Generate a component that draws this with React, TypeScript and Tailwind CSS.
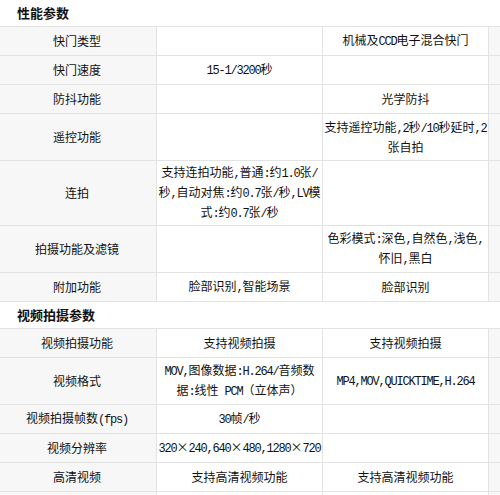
import React from "react";

function T({ s }: { s: string }) {
  const parts = s.split(/([\x20-\x7e]+)/).filter((p) => p.length > 0);
  return (
    <>
      {parts.map((p, i) =>
        /^[\x20-\x7e]+$/.test(p) ? (
          <span key={i} className="font-['Liberation_Mono',monospace] tracking-[-1.2px]">
            {p}
          </span>
        ) : (
          <span key={i}>{p}</span>
        )
      )}
    </>
  );
}

type Content = string | string[];

function CellText({ c }: { c: Content }) {
  if (Array.isArray(c)) {
    return (
      <div className="flex flex-col items-center leading-[18px]">
        {c.map((l, i) => (
          <div key={i} className="whitespace-nowrap">
            <T s={l} />
          </div>
        ))}
      </div>
    );
  }
  return (
    <div className="whitespace-nowrap">
      <T s={c} />
    </div>
  );
}

function Row({ h, a, b, c }: { h: string; a: Content; b: Content; c: Content }) {
  return (
    <div className={`flex border-b border-[#e3e3e3] ${h}`}>
      <div className="w-[157px] shrink-0 border-r border-[#e3e3e3] bg-[#f7f7f7] flex items-center justify-center pr-[2px]">
        <CellText c={a} />
      </div>
      <div className="w-[166px] shrink-0 border-r border-[#e3e3e3] flex items-center justify-center">
        <CellText c={b} />
      </div>
      <div className="w-[166px] shrink-0 border-r border-[#e3e3e3] flex items-center justify-center">
        <CellText c={c} />
      </div>
      <div className="flex-1 bg-[#f7f7f7]" />
    </div>
  );
}

function Header({ t }: { t: string }) {
  return (
    <div className="h-[27px] flex items-center border-b border-[#e3e3e3] pl-[17px] text-[13px] font-bold text-[#111]">
      {t}
    </div>
  );
}

export default function App() {
  return (
    <div className="w-[500px] h-[495px] overflow-hidden bg-white text-[12px] text-[#111] font-['Noto_Sans_CJK_SC',sans-serif]">
      <Header t="性能参数" />
      <Row h="h-[29px]" a="快门类型" b="" c="机械及CCD电子混合快门" />
      <Row h="h-[29px]" a="快门速度" b="15-1/3200秒" c="" />
      <Row h="h-[29px]" a="防抖功能" b="" c="光学防抖" />
      <Row h="h-[47px]" a="遥控功能" b="" c={["支持遥控功能,2秒/10秒延时,2", "张自拍"]} />
      <Row
        h="h-[65px]"
        a="连拍"
        b={["支持连拍功能,普通:约1.0张/", "秒,自动对焦:约0.7张/秒,LV模", "式:约0.7张/秒"]}
        c=""
      />
      <Row h="h-[47px]" a="拍摄功能及滤镜" b="" c={["色彩模式:深色,自然色,浅色,", "怀旧,黑白"]} />
      <Row h="h-[29px]" a="附加功能" b="脸部识别,智能场景" c="脸部识别" />
      <Header t="视频拍摄参数" />
      <Row h="h-[29px]" a="视频拍摄功能" b="支持视频拍摄" c="支持视频拍摄" />
      <Row
        h="h-[47px]"
        a="视频格式"
        b={["MOV,图像数据:H.264/音频数", "据:线性 PCM（立体声）"]}
        c="MP4,MOV,QUICKTIME,H.264"
      />
      <Row h="h-[29px]" a="视频拍摄帧数(fps)" b="30帧/秒" c="" />
      <Row h="h-[29px]" a="视频分辨率" b="320×240,640×480,1280×720" c="" />
      <Row h="h-[29px]" a="高清视频" b="支持高清视频功能" c="支持高清视频功能" />
      <Row h="h-[29px]" a="" b="" c="" />
    </div>
  );
}
